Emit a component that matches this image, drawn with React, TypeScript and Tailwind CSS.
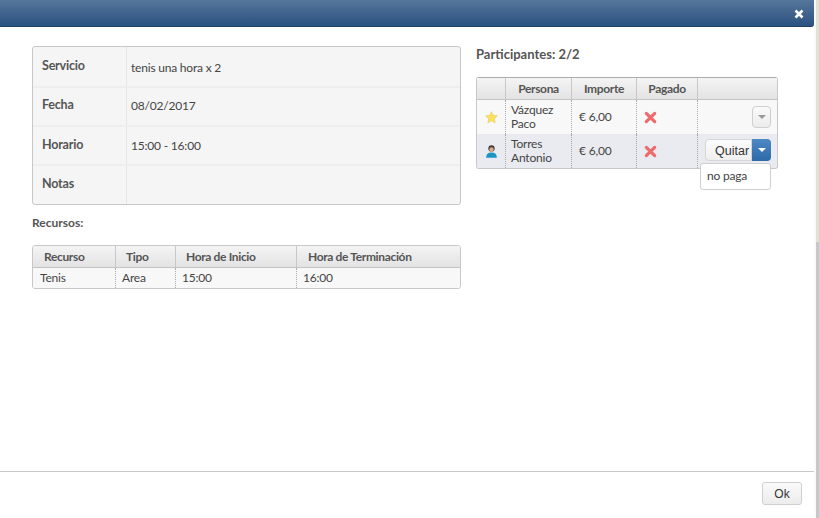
const infoRows = [
  { label: "Servicio", value: "tenis una hora x 2", labelTop: "pt-[10px]", valueTop: "pt-[12px]", height: "h-[39px]" },
  { label: "Fecha", value: "08/02/2017", labelTop: "pt-[8px]", valueTop: "pt-[9px]", height: "h-[39px]" },
  { label: "Horario", value: "15:00 - 16:00", labelTop: "pt-[9px]", valueTop: "pt-[10px]", height: "h-[39px]" },
  { label: "Notas", value: "", labelTop: "pt-[9px]", valueTop: "pt-[10px]", height: "h-[40px]" },
]

function Caret({ className }: { className: string }) {
  return <span className={`w-0 h-0 border-x-[4px] border-x-transparent border-t-[4px] ${className}`} />
}

function StarIcon() {
  return (
    <svg width="13" height="13" viewBox="0 0 14 14">
      <path d="M7 .8l1.9 4 4.300.5-3.200 3 .9 4.400L7 10.500l-3.900 2.200.9-4.400-3.200-3 4.300-.5z" fill="#fbe25c" stroke="#eec65a" strokeWidth=".7" />
    </svg>
  )
}

function UserIcon() {
  return (
    <svg width="13" height="15" viewBox="0 0 14 16">
      <circle cx="7" cy="4.800" r="3.400" fill="#3f3a3a" />
      <ellipse cx="7" cy="6" rx="2.400" ry="2.500" fill="#d9a98c" />
      <path d="M1.200 14.800c0-3.800 2-5.800 5.800-5.800s5.800 2 5.800 5.800z" fill="#1f93c4" />
    </svg>
  )
}

function RedX() {
  return (
    <svg width="13" height="13" viewBox="0 0 14 14">
      <path d="M2.500 2.500l9 9M11.500 2.500l-9 9" stroke="#ef6a6a" strokeWidth="3.400" strokeLinecap="round" />
    </svg>
  )
}

export default function App() {
  return (
    <div className="w-[819px] h-[518px] overflow-hidden bg-white flex font-['Lato','Noto_Sans',sans-serif] text-[12px] tracking-[-0.2px] text-[#333]">
      <div className="w-[814px] flex flex-col">
        <div className="h-[27px] shrink-0 bg-gradient-to-b from-[#56769b] to-[#2a5280] border-b border-[#1f3f63] rounded-br-[3px] flex items-center justify-end pr-[10px] pt-[1px]">
          <svg width="10" height="10" viewBox="0 0 10 10">
            <path d="M1.500 1.500l7 7M8.500 1.500l-7 7" stroke="#fff" strokeWidth="2.600" />
          </svg>
        </div>

        <div className="flex-1 flex pl-[32px] pt-[19px]">
          <div className="w-[429px]">
            <div className="border border-[#c8c8c8] rounded-[3px] bg-[#f5f5f5] overflow-hidden">
              {infoRows.map((row, i) => (
                <div key={row.label} className={`flex ${row.height} ${i > 0 ? "border-t-2 border-[#eeeeee]" : ""}`}>
                  <div className={`w-[94px] border-r border-[#e6e6e6] pl-[9px] font-bold text-[12.500px] text-[#555] ${row.labelTop}`}>{row.label}</div>
                  <div className={`pl-[4px] text-[#444] ${row.valueTop}`}>{row.value}</div>
                </div>
              ))}
            </div>

            <div className="mt-[9px] font-bold text-[12px] tracking-normal text-[#555]">Recursos:</div>

            <div className="mt-[13px] border border-[#c8c8c8] rounded-[3px] overflow-hidden">
              <div className="flex h-[22px] bg-gradient-to-b from-[#f4f4f4] to-[#e3e3e3] border-b border-[#c4c4c4] font-bold tracking-[-0.35px] text-[#555] leading-[22px]">
                <div className="w-[83px] pl-[11px] border-r border-[#c8c8c8]">Recurso</div>
                <div className="w-[60px] pl-[10px] border-r border-[#c8c8c8]">Tipo</div>
                <div className="w-[121px] pl-[10px] border-r border-[#c8c8c8]">Hora de Inicio</div>
                <div className="flex-1 pl-[11px]">Hora de Terminación</div>
              </div>
              <div className="flex h-[20px] bg-[#f8f8f8] text-[#444] leading-[20px]">
                <div className="w-[83px] pl-[7px] border-r border-dotted border-[#aaa]">Tenis</div>
                <div className="w-[60px] pl-[6px] border-r border-dotted border-[#aaa]">Area</div>
                <div className="w-[121px] pl-[6px] border-r border-dotted border-[#aaa]">15:00</div>
                <div className="flex-1 pl-[6px]">16:00</div>
              </div>
            </div>
          </div>

          <div className="ml-[15px] w-[302px]">
            <div className="font-bold text-[13px] tracking-normal text-[#555] leading-[16px]">Participantes: 2/2</div>

            <div className="relative mt-[15px] border border-[#c8c8c8] border-t-[#aaa] rounded-[3px]">
              <div className="flex h-[22px] bg-gradient-to-b from-[#f4f4f4] to-[#e3e3e3] border-b border-[#c4c4c4] font-bold tracking-[-0.35px] text-[#555] leading-[22px] text-center">
                <div className="w-[29px] border-r border-[#c8c8c8]" />
                <div className="w-[66px] border-r border-[#c8c8c8]">Persona</div>
                <div className="w-[65px] border-r border-[#c8c8c8]">Importe</div>
                <div className="w-[61px] border-r border-[#c8c8c8]">Pagado</div>
                <div className="flex-1" />
              </div>

              <div className="flex h-[34px] bg-[#f8f8f8] text-[#444] leading-[14px]">
                <div className="w-[29px] border-r border-dotted border-[#aaa] flex items-center justify-center"><StarIcon /></div>
                <div className="w-[66px] pl-[5px] border-r border-dotted border-[#aaa] flex items-center">Vázquez<br />Paco</div>
                <div className="w-[65px] pl-[7px] border-r border-dotted border-[#aaa] flex items-center">€ 6,00</div>
                <div className="w-[61px] pl-[7px] border-r border-dotted border-[#aaa] flex items-center"><RedX /></div>
                <div className="flex-1 flex items-center justify-end pr-[6px]">
                  <div className="w-[19px] h-[22px] border border-[#cfcfcf] rounded-[4px] bg-gradient-to-b from-[#fafafa] to-[#ececec] flex items-center justify-center">
                    <Caret className="border-t-[#999]" />
                  </div>
                </div>
              </div>

              <div className="flex h-[34px] bg-[#e9ebf0] text-[#444] leading-[14px] rounded-b-[3px]">
                <div className="w-[29px] border-r border-dotted border-[#aaa] flex items-center justify-center"><UserIcon /></div>
                <div className="w-[66px] pl-[5px] border-r border-dotted border-[#aaa] flex items-center">Torres<br />Antonio</div>
                <div className="w-[65px] pl-[7px] border-r border-dotted border-[#aaa] flex items-center">€ 6,00</div>
                <div className="w-[61px] pl-[7px] border-r border-dotted border-[#aaa] flex items-center"><RedX /></div>
                <div className="flex-1 flex items-start justify-end pr-[6px] pt-[5px]">
                  <div className="w-[47px] h-[22px] border border-[#d6d6d6] rounded-l-[4px] bg-gradient-to-b from-[#fcfcfc] to-[#efefef] font-['Liberation_Sans',sans-serif] text-[12.500px] tracking-normal text-[#333] leading-[22px] pl-[9px]">Quitar</div>
                  <div className="w-[19px] h-[22px] rounded-r-[4px] bg-gradient-to-b from-[#4d89c4] to-[#2e69a8] flex items-center justify-center">
                    <Caret className="border-t-white" />
                  </div>
                </div>
              </div>

              {/* menu desplegable de Quitar */}
              <div className="absolute left-[223px] top-[85px] w-[71px] h-[27px] bg-white border border-[#cfcfcf] rounded-[3px] pl-[6px] leading-[24px] text-[#444]">no paga</div>
            </div>
          </div>
        </div>

        <div className="h-[47px] shrink-0 border-t border-[#c9c9c9] flex justify-end pr-[12px] pt-[10px]">
          <button className="w-[40px] h-[23px] border border-[#cfcfcf] rounded-[3px] bg-gradient-to-b from-[#fafafa] to-[#ececec] font-['Liberation_Sans',sans-serif] text-[12px] tracking-normal text-[#333]">Ok</button>
        </div>
      </div>
      <div className="w-[2px] bg-[#fafafa]" />
      <div className="w-[3px] flex flex-col">
        <div className="h-[242px] bg-[#e6e0d4]" />
        <div className="flex-1 bg-[#c8c8c8]" />
      </div>
    </div>
  )
}
